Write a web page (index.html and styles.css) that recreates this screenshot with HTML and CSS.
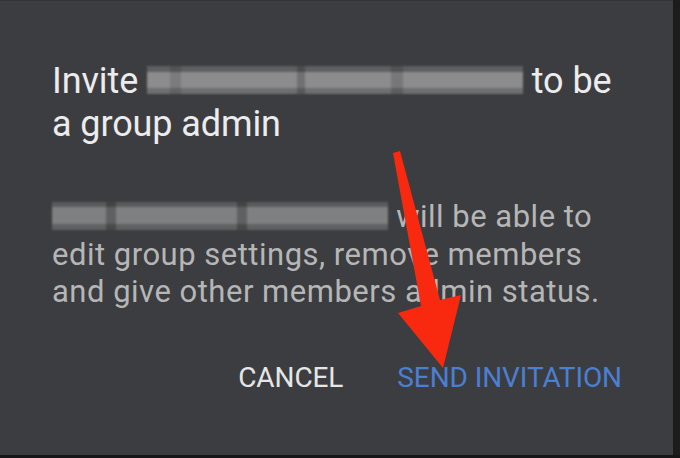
FILE: index.html
```html
<!DOCTYPE html>
<html>
<head>
<meta charset="utf-8">
<link rel="stylesheet" href="styles.css">
</head>
<body>
<div class="screen">
  <div class="dialog">
    <h1 class="title"><span class="line">Invite <span class="redact redact-title"></span> to be</span><span class="line">a group admin</span></h1>
    <p class="message"><span class="redact redact-body"></span> will be able to edit group settings, remove members and give other members admin status.</p>
    <div class="actions">
      <span class="btn btn-cancel">CANCEL</span>
      <span class="btn btn-send">SEND INVITATION</span>
    </div>
  </div>
  <div class="edge-right"></div>
</div>
<svg class="arrow" width="680" height="458" viewBox="0 0 680 458">
  <polygon points="393,153 400,151 440,300 461,295 443,368 398,313 421,306" fill="#f8290f"/>
</svg>
</body>
</html>
```

FILE: styles.css
```css
html, body {
  margin: 0;
  padding: 0;
}
body {
  width: 680px;
  height: 458px;
  background: #161616;
  font-family: Roboto, "Liberation Sans", sans-serif;
  overflow: hidden;
  position: relative;
}
.screen {
  display: flex;
  height: 455px;
}
.dialog {
  flex: 1;
  background: #3c3d40;
  border-top: 1px solid #333436;
  padding: 59px 0 0 52px;
  box-sizing: border-box;
  display: flex;
  flex-direction: column;
}
.edge-right {
  width: 7px;
  background: #1c1c1d;
}
.title {
  margin: 0;
  font-weight: 400;
  font-size: 36px;
  line-height: 43px;
  color: #ececec;
  letter-spacing: -0.1px;
  display: flex;
  flex-direction: column;
}
.line {
  display: block;
  white-space: nowrap;
}
.message {
  margin: 52px 0 0 0;
  font-size: 31px;
  line-height: 37.5px;
  color: #b6b6b6;
  width: 566px;
  letter-spacing: 0.5px;
}
.redact {
  display: inline-block;
  height: 28px;
  filter: blur(1px);
}
.redact-title {
  width: 376px;
  vertical-align: -1px;
  background:
    linear-gradient(90deg, transparent 0 6%, rgba(0,0,0,0.12) 6% 9%, transparent 9% 40%, rgba(0,0,0,0.2) 40% 42%, transparent 42% 65%, rgba(0,0,0,0.15) 65% 68%, transparent 68%),
    linear-gradient(180deg, #5e5f62 0 20%, #8c8c8e 20% 80%, #6e6f71 80%),
    #808082;
}
.redact-body {
  width: 336px;
  vertical-align: -3px;
  background:
    linear-gradient(90deg, transparent 0 16%, rgba(0,0,0,0.25) 16% 19%, transparent 19% 55%, rgba(0,0,0,0.25) 55% 58%, transparent 58%),
    linear-gradient(180deg, #5a5b5e 0 18%, #7f8082 18% 78%, #606164 78%);
}
.actions {
  display: flex;
  justify-content: flex-end;
  gap: 54px;
  padding-right: 51px;
  margin-top: 51px;
}
.btn {
  font-size: 28px;
  line-height: 32px;
  letter-spacing: -0.1px;
}
.btn-cancel {
  color: #e6e6e6;
}
.btn-send {
  color: #4b7fd3;
}
.arrow {
  position: absolute;
  left: 0;
  top: 0;
}
```
